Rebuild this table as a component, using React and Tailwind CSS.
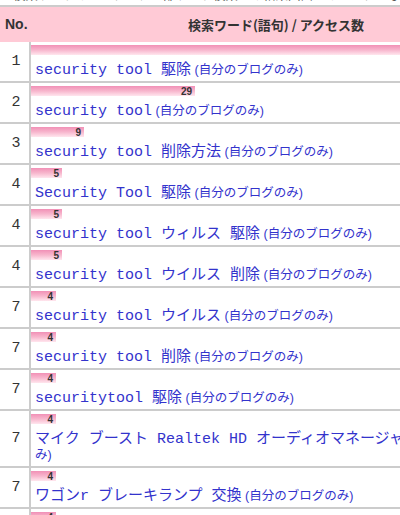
import React from "react";

const rows = [
  { rank: 1, value: 87, words: "security tool 駆除" },
  { rank: 2, value: 29, words: "security tool" },
  { rank: 3, value: 9, words: "security tool 削除方法" },
  { rank: 4, value: 5, words: "Security Tool 駆除" },
  { rank: 4, value: 5, words: "security tool ウィルス 駆除" },
  { rank: 4, value: 5, words: "security tool ウイルス 削除" },
  { rank: 7, value: 4, words: "security tool ウイルス" },
  { rank: 7, value: 4, words: "security tool 削除" },
  { rank: 7, value: 4, words: "securitytool 駆除" },
  { rank: 7, value: 4, words: "マイク ブースト Realtek HD オーディオマネージャー", wrap: true },
  { rank: 7, value: 4, words: "ワゴンr ブレーキランプ 交換" },
  { rank: 7, value: 4, words: "security tool 駆除方法" },
];

const barWidth = (v) => Math.round(v * 5.55 + 3);

const mono = { fontFamily: '"Liberation Mono", "Noto Sans CJK JP", monospace' };

export default function App() {
  return (
    <div className="h-[515px] w-[400px] overflow-hidden bg-white">
      <p className="-mt-[13px] mb-[2px] ml-[13px] whitespace-nowrap text-[12.5px] leading-[16px] text-[#555] font-['Noto_Sans_CJK_JP',sans-serif]">
        検索ワードのリンクは、一部ワード検索での結果画面へのリンクとなります。
      </p>
      <table className="w-[521px] table-fixed border-separate border-spacing-0 border-t-2 border-[#cccccc]">
        <thead>
          <tr className="bg-[#ffcad6] text-[#333]">
            <th className="h-[35px] w-[31px] p-0 pl-[5px] text-left align-middle font-['Liberation_Sans',sans-serif] text-[14px] font-bold">
              No.
            </th>
            <th className="h-[35px] p-0 text-center align-middle font-['Noto_Sans_CJK_JP',sans-serif] text-[13px] font-bold">
              検索ワード(語句) / アクセス数
            </th>
          </tr>
        </thead>
        <tbody>
          {rows.map((row, i) => (
            <tr key={i}>
              <td
                className="border-b-2 border-r-2 border-[#cccccc] p-0 pl-[3px] text-center align-middle text-[15px] leading-[16px] text-[#333]"
                style={mono}
              >
                {row.rank}
              </td>
              <td className="border-b-2 border-[#cccccc] p-0 pb-[2px] pt-[3px] align-top">
                <div
                  className="h-[10px] bg-linear-to-b from-[#f190b6] via-[#f7b6cd] to-[#ffe6ee] pr-[3px] text-right font-['Liberation_Sans',sans-serif] text-[10px] font-bold leading-[11px] text-[#333]"
                  style={{ width: barWidth(row.value) }}
                >
                  {row.value}
                </div>
                <div
                  className="mt-[8px] whitespace-nowrap pl-[4px] text-[15px] leading-[16px] text-[#3333cc]"
                  style={mono}
                >
                  {row.words}
                  <span className="font-['Liberation_Sans','Noto_Sans_CJK_JP',sans-serif] text-[12.5px] leading-[12px]">
                    {" "}
                    {row.wrap ? (
                      <>
                        (自分のブログの
                        <br />
                        み)
                      </>
                    ) : (
                      "(自分のブログのみ)"
                    )}
                  </span>
                </div>
              </td>
            </tr>
          ))}
        </tbody>
      </table>
    </div>
  );
}
